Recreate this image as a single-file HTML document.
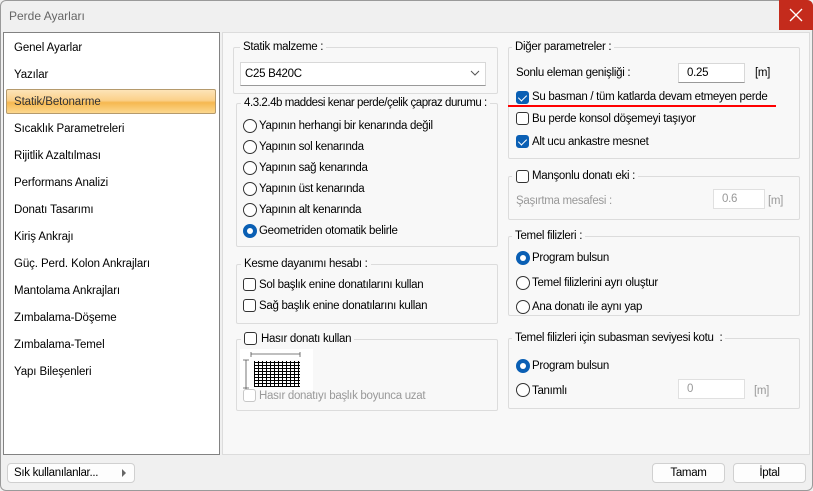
<!DOCTYPE html>
<html><head><meta charset="utf-8"><style>
*{margin:0;padding:0;box-sizing:border-box}
body{width:813px;height:491px;overflow:hidden;background:#f0f0f0;font-family:"Liberation Sans",Arial,sans-serif;font-size:11.5px;letter-spacing:-0.3px;color:#000;position:relative}
.a{position:absolute}
.t{position:absolute;line-height:14px;white-space:nowrap}
.g{position:absolute;border:1px solid #dcdcdc;border-radius:2px}
.lg{position:absolute;background:#f8f8f8;padding:0 3px;line-height:14px;white-space:nowrap}
.cb{position:absolute;width:13px;height:13px;border:1px solid #333;border-radius:3px;background:#fff}
.cb.on{background:#0a5fb4;border-color:#0a5fb4}
.cb.on:after{content:"";position:absolute;left:3px;top:1px;width:4px;height:7px;border:solid #fff;border-width:0 1.5px 1.5px 0;transform:rotate(45deg)}
.cb.dis{border-color:#c8c8c8}
.rb{position:absolute;width:14px;height:14px;border:1px solid #333;border-radius:50%;background:#fff}
.rb.on{background:#0a5fb4;border-color:#0a5fb4}
.rb.on:after{content:"";position:absolute;left:3px;top:3px;width:6px;height:6px;border-radius:50%;background:#fff}
.in{position:absolute;background:#fff;border:1px solid #d8d8d8;border-bottom-color:#999;line-height:18px;padding-left:8px}
.btn{position:absolute;background:#fdfdfd;border:1px solid #d0d0d0;border-radius:4px;text-align:center;line-height:18px}
.li{position:absolute;left:14px;line-height:14px;letter-spacing:-0.1px}
.gr{color:#999}
</style></head><body>
<div class="a" style="left:0;top:0;width:813px;height:491px;border:1px solid #9a9a9a;border-radius:6px"></div>
<div class="t" style="left:9px;top:9px;font-size:12px;color:#666;letter-spacing:0">Perde Ayarları</div>
<div class="a" style="left:779px;top:0;width:34px;height:30px;background:#c42b1c;border-top-right-radius:6px"></div>
<svg class="a" style="left:789px;top:8px" width="14" height="14"><path d="M1 1L13 13M13 1L1 13" stroke="#fff" stroke-width="1.3"/></svg>

<div class="a" style="left:3px;top:32px;width:217px;height:423px;background:#fff;border:1px solid #828282"></div>
<div class="a" style="left:6px;top:89px;width:210px;height:25px;border:1px solid #b59a6c;border-radius:2px;background:linear-gradient(#fde4b8,#fbd08a 45%,#f6b850 55%,#fcd88e)"></div>
<div class="li" style="top:41px">Genel Ayarlar</div>
<div class="li" style="top:68px">Yazılar</div>
<div class="li" style="top:95px;color:#333">Statik/Betonarme</div>
<div class="li" style="top:122px">Sıcaklık Parametreleri</div>
<div class="li" style="top:149px">Rijitlik Azaltılması</div>
<div class="li" style="top:176px">Performans Analizi</div>
<div class="li" style="top:203px">Donatı Tasarımı</div>
<div class="li" style="top:230px">Kiriş Ankrajı</div>
<div class="li" style="top:257px">Güç. Perd. Kolon Ankrajları</div>
<div class="li" style="top:284px">Mantolama Ankrajları</div>
<div class="li" style="top:311px">Zımbalama-Döşeme</div>
<div class="li" style="top:338px">Zımbalama-Temel</div>
<div class="li" style="top:365px">Yapı Bileşenleri</div>

<div class="a" style="left:222px;top:32px;width:588px;height:423px;background:#f8f8f8;border:1px solid #dcdcdc"></div>

<div class="g" style="left:233px;top:47px;width:265px;height:47px"></div>
<div class="lg" style="left:240px;top:40px">Statik malzeme :</div>
<div class="in" style="left:240px;top:62px;width:246px;height:24px;line-height:22px;padding-left:4px">C25 B420C</div>
<svg class="a" style="left:470px;top:70px" width="10" height="7"><path d="M1 1L5 5L9 1" fill="none" stroke="#555"/></svg>

<div class="g" style="left:236px;top:103px;width:262px;height:144px"></div>
<div class="lg" style="left:241px;top:96px;letter-spacing:-0.45px">4.3.2.4b maddesi kenar perde/çelik çapraz durumu :</div>
<div class="rb" style="left:243px;top:119px"></div><div class="t" style="left:259px;top:119px">Yapının herhangi bir kenarında değil</div>
<div class="rb" style="left:243px;top:140px"></div><div class="t" style="left:259px;top:140px">Yapının sol kenarında</div>
<div class="rb" style="left:243px;top:161px"></div><div class="t" style="left:259px;top:161px">Yapının sağ kenarında</div>
<div class="rb" style="left:243px;top:182px"></div><div class="t" style="left:259px;top:182px">Yapının üst kenarında</div>
<div class="rb" style="left:243px;top:203px"></div><div class="t" style="left:259px;top:203px">Yapının alt kenarında</div>
<div class="rb on" style="left:243px;top:224px"></div><div class="t" style="left:259px;top:224px">Geometriden otomatik belirle</div>

<div class="g" style="left:236px;top:264px;width:262px;height:60px"></div>
<div class="lg" style="left:241px;top:257px">Kesme dayanımı hesabı :</div>
<div class="cb" style="left:243px;top:278px"></div><div class="t" style="left:259px;top:278px">Sol başlık enine donatılarını kullan</div>
<div class="cb" style="left:243px;top:299px"></div><div class="t" style="left:259px;top:299px">Sağ başlık enine donatılarını kullan</div>

<div class="g" style="left:236px;top:339px;width:262px;height:72px"></div>
<div class="lg" style="left:241px;top:332px;padding-left:20px">Hasır donatı kullan</div>
<div class="cb" style="left:244px;top:332px"></div>
<div class="a" style="left:240px;top:349px;width:73px;height:41px;background:#fff"></div>
<svg class="a" style="left:240px;top:349px" width="73" height="41">
<path d="M11 5H60M11 3V8M60 3V8M6 11V40M3 11H9M3 39H9" stroke="#555" stroke-width="0.8"/>
<path d="M14 13.5H60M14 16.5H60M14 19.5H60M14 22.5H60M14 25.5H60M14 28.5H60M14 31.5H60M14 34.5H60M14 37.5H60M14.5 12V38M18.5 12V38M22.5 12V38M26.5 12V38M30.5 12V38M34.5 12V38M38.5 12V38M42.5 12V38M46.5 12V38M50.5 12V38M54.5 12V38M58.5 12V38" stroke="#000" stroke-width="1"/>
</svg>
<div class="cb dis" style="left:243px;top:389px"></div><div class="t gr" style="left:259px;top:389px">Hasır donatıyı başlık boyunca uzat</div>

<div class="g" style="left:508px;top:47px;width:292px;height:112px"></div>
<div class="lg" style="left:512px;top:40px">Diğer parametreler :</div>
<div class="t" style="left:516px;top:66px">Sonlu eleman genişliği :</div>
<div class="in" style="left:678px;top:63px;width:67px;height:20px">0.25</div>
<div class="t" style="left:755px;top:66px">[m]</div>
<div class="cb on" style="left:516px;top:91px"></div><div class="t" style="left:532px;top:90px">Su basman / tüm katlarda devam etmeyen perde</div>
<div class="a" style="left:508px;top:105px;width:268px;height:2px;background:#f00"></div>
<div class="cb" style="left:516px;top:112px"></div><div class="t" style="left:532px;top:112px">Bu perde konsol döşemeyi taşıyor</div>
<div class="cb on" style="left:516px;top:135px"></div><div class="t" style="left:532px;top:135px">Alt ucu ankastre mesnet</div>

<div class="g" style="left:508px;top:176px;width:292px;height:44px"></div>
<div class="lg" style="left:512px;top:169px;padding-left:20px">Manşonlu donatı eki :</div>
<div class="cb" style="left:516px;top:170px"></div>
<div class="t gr" style="left:516px;top:194px">Şaşırtma mesafesi :</div>
<div class="in gr" style="left:713px;top:189px;width:52px;height:20px;border-color:#e0e0e0">0.6</div>
<div class="t gr" style="left:768px;top:194px">[m]</div>

<div class="g" style="left:508px;top:236px;width:292px;height:80px"></div>
<div class="lg" style="left:512px;top:229px">Temel filizleri :</div>
<div class="rb on" style="left:516px;top:251px"></div><div class="t" style="left:532px;top:251px">Program bulsun</div>
<div class="rb" style="left:516px;top:276px"></div><div class="t" style="left:532px;top:276px">Temel filizlerini ayrı oluştur</div>
<div class="rb" style="left:516px;top:300px"></div><div class="t" style="left:532px;top:300px">Ana donatı ile aynı yap</div>

<div class="g" style="left:508px;top:338px;width:292px;height:71px"></div>
<div class="lg" style="left:512px;top:331px">Temel filizleri için subasman seviyesi kotu&nbsp; :</div>
<div class="rb on" style="left:516px;top:359px"></div><div class="t" style="left:532px;top:359px">Program bulsun</div>
<div class="rb" style="left:516px;top:383px"></div><div class="t" style="left:532px;top:384px">Tanımlı</div>
<div class="in gr" style="left:678px;top:379px;width:67px;height:20px;border-color:#e0e0e0">0</div>
<div class="t gr" style="left:754px;top:384px">[m]</div>

<div class="btn" style="left:7px;top:463px;height:20px;text-align:left;padding-left:6px;width:128px">Sık kullanılanlar...</div>
<svg class="a" style="left:121px;top:469px" width="6" height="8"><path d="M1 0L5 4L1 8Z" fill="#666"/></svg>
<div class="btn" style="left:652px;top:463px;width:73px;height:20px">Tamam</div>
<div class="btn" style="left:733px;top:463px;width:73px;height:20px">İptal</div>
</body></html>
